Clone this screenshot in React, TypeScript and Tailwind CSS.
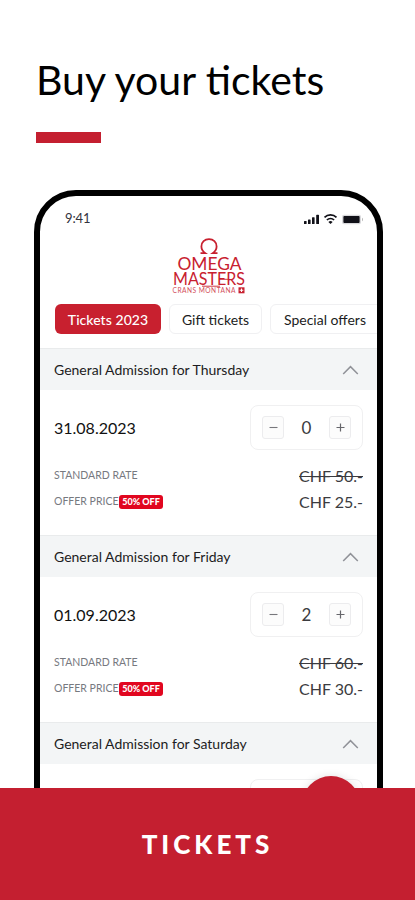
import { useState } from 'react';

interface Ticket {
  day: string;
  date: string;
  rate: string;
  offer: string;
  count: number;
}

const tickets: Ticket[] = [
  { day: 'Thursday', date: '31.08.2023', rate: 'CHF 50.-', offer: 'CHF 25.-', count: 0 },
  { day: 'Friday', date: '01.09.2023', rate: 'CHF 60.-', offer: 'CHF 30.-', count: 2 },
  { day: 'Saturday', date: '02.09.2023', rate: 'CHF 60.-', offer: 'CHF 30.-', count: 0 },
];

const StatusBar = () => (
  <div className="flex h-[46px] items-center justify-between pl-[25px] pr-[14px]">
    <span className="text-[13px] tracking-[-0.1px] text-[#33333d]">9:41</span>
    <svg width="60" height="12" viewBox="0 0 60 12" fill="#111118">
      <rect x="1" y="8" width="2.6" height="3" rx="0.6" />
      <rect x="5" y="6.5" width="2.6" height="4.5" rx="0.6" />
      <rect x="9" y="4.2" width="2.6" height="6.8" rx="0.6" />
      <rect x="13.2" y="1.8" width="2.8" height="9.2" rx="0.6" />
      <g fill="none" stroke="#111118" strokeWidth="1.7">
        <path d="M21.5 4.4a8.6 8.6 0 0 1 12 0" />
        <path d="M23.9 7a5.2 5.2 0 0 1 7.2 0" />
      </g>
      <path d="M25.4 8.9a3.2 3.2 0 0 1 4.2 0L27.5 11z" />
      <rect x="39" y="1.8" width="19" height="9.4" rx="2" fill="#d9d9dc" />
      <rect x="40.4" y="3.1" width="16.2" height="6.8" rx="1" />
      <path d="M59 4.7c.8.3 1 .9 1 1.8s-.2 1.5-1 1.8z" fill="#bbb" />
    </svg>
  </div>
);

const Logo = () => (
  <svg className="mx-auto mt-[-5px] block" width="76" height="58" viewBox="0 0 76 58" fill="#c8202f">
    <path
      d="M29.5 16.2h4.8c-2.4-1.8-3.9-4.2-3.9-6.8 0-4.4 3.3-7.2 7.6-7.2s7.6 2.8 7.6 7.2c0 2.6-1.5 5-3.9 6.8h4.8"
      fill="none"
      stroke="#c8202f"
      strokeWidth="1.8"
    />
    <text x="6.5" y="32.6" fontSize="17" textLength="64" lengthAdjust="spacingAndGlyphs">OMEGA</text>
    <text x="2" y="48.3" fontSize="17" textLength="72" lengthAdjust="spacingAndGlyphs">MASTERS</text>
    <path d="M31 49.2h18M48 42.3h10" stroke="#c8202f" strokeWidth="0.9" />
    <text x="1.5" y="55.8" fontSize="6.6" textLength="63" opacity="0.8">CRANS MONTANA</text>
    <rect x="67.5" y="50.3" width="6" height="6" />
    <path d="M70.5 51.5v3.6M68.7 53.3h3.6" stroke="#fff" strokeWidth="1.1" />
  </svg>
);

const Tabs = () => (
  <div className="mt-[9px] flex space-x-2 pl-[15px] text-[14px] text-[#1c1c22]">
    <div className="flex h-[30px] w-[106px] shrink-0 items-center justify-center rounded-[6px] bg-[#c8202f] font-medium tracking-[0.05px] text-white">
      Tickets 2023
    </div>
    <div className="flex h-[30px] w-[93px] shrink-0 items-center justify-center rounded-[6px] border border-[#f0f0f2]">
      Gift tickets
    </div>
    <div className="flex h-[30px] w-[120px] shrink-0 items-center rounded-[6px] border border-[#f0f0f2] pl-[13px]">
      Special offers
    </div>
  </div>
);

const stepButton =
  'flex h-[23px] w-[22px] items-center justify-center rounded-[3px] border border-[#ececee] bg-[#fcfcfc]';

const TicketSection = ({ ticket }: { ticket: Ticket }) => {
  const [count, setCount] = useState(ticket.count);

  return (
    <div className="h-[187px]">
      <div className="flex h-[42px] items-center justify-between border-t border-[#e9ebec] bg-[#f3f5f6] pl-[14px] pr-[18px]">
        <span className="text-[14px] text-[#1c1c22]">General Admission for {ticket.day}</span>
        <svg width="17" height="10" viewBox="0 0 17 10" fill="none" stroke="#909298" strokeWidth="1.5">
          <path d="M1.2 9 8.5 1.6 15.8 9" />
        </svg>
      </div>
      <div className="mt-[15px] flex items-center justify-between pl-[14px] pr-[14px]">
        <span className="text-[16px] text-[#111]">{ticket.date}</span>
        <div className="flex h-[45px] w-[113px] items-center justify-between rounded-[8px] border border-[#f0f0f1] px-[11px]">
          <button className={stepButton} onClick={() => setCount(Math.max(0, count - 1))}>
            <svg width="9" height="9" stroke="#77777c" strokeWidth="1.1">
              <path d="M0.5 4.5h8" />
            </svg>
          </button>
          <span className="text-[17px] text-[#3b3b40]">{count}</span>
          <button className={stepButton} onClick={() => setCount(count + 1)}>
            <svg width="9" height="9" stroke="#66666b" strokeWidth="1.2">
              <path d="M0.5 4.5h8M4.5 0.5v8" />
            </svg>
          </button>
        </div>
      </div>
      <div className="mt-[13px] flex h-[26px] items-center justify-between pl-[14px] pr-[14px]">
        <span className="text-[10.5px] text-[#77797f]">STANDARD RATE</span>
        <span className="text-[16px] text-[#3b3b40] line-through decoration-1">{ticket.rate}</span>
      </div>
      <div className="flex h-[26px] items-center justify-between pl-[14px] pr-[14px]">
        <div className="flex items-center">
          <span className="w-[65px] whitespace-nowrap text-[10.5px] text-[#77797f]">OFFER PRICE</span>
          <span className="flex h-[14px] w-[44px] items-center justify-center whitespace-nowrap rounded-[3px] bg-[#e1061f] text-[9px] font-black text-white">
            50% OFF
          </span>
        </div>
        <span className="text-[16px] text-[#3b3b40]">{ticket.offer}</span>
      </div>
    </div>
  );
};

const App = () => {
  return (
    <div className="relative flex h-[900px] w-[415px] flex-col overflow-hidden bg-white font-['Lato',sans-serif]">
      <div className="h-[190px] shrink-0 pl-[36px] pt-[55px]">
        <h1 className="h-[50px] whitespace-nowrap text-[41px] leading-[50px] text-black">Buy your tickets</h1>
        <div className="mt-[27px] h-[11px] w-[65px] bg-[#c41f30]" />
      </div>

      {/* phone */}
      <div className="relative ml-[34px] h-[598px] w-[349px] shrink-0 overflow-hidden">
        <div className="h-[700px] overflow-hidden rounded-[42px] border-[6px] border-black bg-white">
          <StatusBar />
          <Logo />
          <Tabs />
          <div className="mt-[14px]">
            {tickets.map((ticket) => (
              <TicketSection key={ticket.day} ticket={ticket} />
            ))}
          </div>
        </div>
        <div className="absolute left-[268px] top-[586px] h-[58px] w-[58px] rounded-full bg-[#c41f30] shadow-[0_0_8px_rgba(0,0,0,0.12)]" />
      </div>

      <div className="flex flex-1 items-center justify-center bg-[#c41f30]">
        <span className="text-[26px] font-black tracking-[4px] text-white">TICKETS</span>
      </div>
    </div>
  );
};

export default App;
